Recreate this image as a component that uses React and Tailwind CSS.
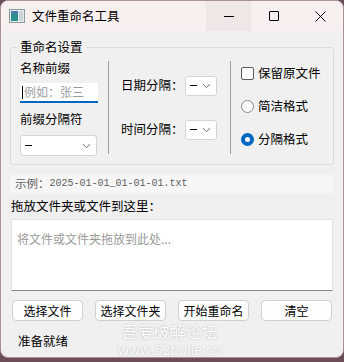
import React from 'react';

const CJK = { fontFamily: '"Noto Sans CJK SC", "Noto Sans", sans-serif' };

const Chevron = () => (
    <svg width="9" height="6" viewBox="0 0 9 6" className="shrink-0">
        <path d="M1 1.2 L4.5 4.6 L8 1.2" fill="none" stroke="#6b6b6b" strokeWidth="1" />
    </svg>
);

const Combo = ({ className }) => (
    <div className={`flex items-center justify-between bg-white border border-[#d4d4d4] rounded-[3px] pl-[4px] pr-[5px] ${className}`}>
        <div className="w-[7px] h-px bg-black" />
        <Chevron />
    </div>
);

const Radio = ({ checked }) =>
    checked ? (
        <div className="w-[13px] h-[13px] rounded-full bg-[#0067c0] flex items-center justify-center">
            <div className="w-[5px] h-[5px] rounded-full bg-white" />
        </div>
    ) : (
        <div className="w-[13px] h-[13px] rounded-full border border-[#8a8a8a] bg-[#fbfbfb]" />
    );

const Btn = ({ children }) => (
    <button className="w-[71px] h-[21px] bg-[#fdfdfd] border border-[#d0d0d0] rounded-[4px] text-[12px] leading-none text-black flex items-center justify-center">
        {children}
    </button>
);

export default function App() {
    return (
        <div className="w-[344px] h-[362px] bg-[#6d4e56] overflow-hidden" style={CJK}>
            <div className="relative w-[344px] h-[358px] rounded-[8px] border border-[#a89296] bg-[#f0f0f0] overflow-hidden flex flex-col">
                {/* 标题栏 */}
                <div className="h-[30px] bg-[#f8efef] flex items-center shrink-0">
                    <svg width="16" height="14" viewBox="0 0 16 14" className="ml-[8px]">
                        <rect x="0.5" y="0.5" width="15" height="13" fill="#e8eef0" stroke="#8a9aa0" />
                        <rect x="2" y="2" width="7" height="10" fill="#2f8f8a" />
                        <rect x="2" y="2" width="7" height="3" fill="#4a7fb0" />
                        <rect x="10" y="2" width="4" height="10" fill="#c8d4d8" />
                    </svg>
                    <span className="ml-[7px] text-[12.5px] text-black">文件重命名工具</span>
                    <div className="ml-auto flex h-full">
                        <div className="w-[45px] h-full bg-[#efe6e6] flex items-center justify-center">
                            <div className="w-[10px] h-px bg-black" />
                        </div>
                        <div className="w-[46px] h-full flex items-center justify-center">
                            <div className="w-[10px] h-[10px] border border-black rounded-[1px]" />
                        </div>
                        <div className="w-[46px] h-full flex items-center justify-center">
                            <svg width="11" height="11" viewBox="0 0 11 11">
                                <path d="M0.5 0.5 L10.5 10.5 M10.5 0.5 L0.5 10.5" stroke="#000" strokeWidth="1" />
                            </svg>
                        </div>
                    </div>
                </div>

                {/* 重命名设置 */}
                <fieldset className="mx-[9px] mt-[8px] h-[126px] border border-[#dcdcdc] rounded-[2px] flex px-[9px] pb-[8px]">
                    <legend className="-ml-[3px] px-[3px] text-[12.5px] leading-[16px] text-black">重命名设置</legend>
                    <div className="w-[78px] flex flex-col pt-[5px]">
                        <span className="text-[12.5px] leading-[16px] text-black">名称前缀</span>
                        <div className="mt-[7px] h-[20px] bg-white border-b-2 border-[#0067c0] flex items-center pl-[2px]">
                            <div className="w-px h-[13px] bg-black" />
                            <span className="ml-px text-[12px] leading-none text-[#9c9c9c]">例如：张三</span>
                        </div>
                        <span className="mt-[8px] text-[12.5px] leading-[16px] text-black">前缀分隔符</span>
                        <Combo className="mt-[8px] h-[21px] w-[77px]" />
                    </div>
                    <div className="ml-[10px] mt-[6px] w-px h-[93px] bg-[#a0a0a0]" />
                    <div className="w-[121px] flex flex-col pl-[12px] pt-[20px]">
                        <div className="flex items-center h-[21px]">
                            <span className="w-[64px] text-[12.5px] leading-none text-black">日期分隔：</span>
                            <Combo className="h-[20px] w-[32px]" />
                        </div>
                        <div className="flex items-center h-[21px] mt-[23px]">
                            <span className="w-[64px] text-[12.5px] leading-none text-black">时间分隔：</span>
                            <Combo className="h-[20px] w-[32px]" />
                        </div>
                    </div>
                    <div className="mt-[6px] w-px h-[93px] bg-[#a0a0a0]" />
                    <div className="flex flex-col pl-[10px] pt-[12px] gap-[20px]">
                        <div className="flex items-center h-[13px]">
                            <div className="w-[13px] h-[13px] border border-[#5c5c5c] rounded-[2px] bg-[#fbfbfb]" />
                            <span className="ml-[4px] text-[12.5px] leading-none text-black">保留原文件</span>
                        </div>
                        <div className="flex items-center h-[13px]">
                            <Radio />
                            <span className="ml-[4px] text-[12.5px] leading-none text-black">简洁格式</span>
                        </div>
                        <div className="flex items-center h-[13px]">
                            <Radio checked />
                            <span className="ml-[4px] text-[12.5px] leading-none text-black">分隔格式</span>
                        </div>
                    </div>
                </fieldset>

                {/* 示例 */}
                <div className="mx-[9px] mt-[10px] h-[18px] bg-[#f6f6f6] flex items-center pl-[5px] text-[#5e5e5e]">
                    <span className="text-[11.5px] leading-none">示例：</span>
                    <span className="text-[10px] leading-none" style={{ fontFamily: '"Liberation Mono", monospace' }}>
                        2025-01-01_01-01-01.txt
                    </span>
                </div>

                {/* 拖放区 */}
                <span className="ml-[10px] mt-[5px] text-[12.5px] leading-[16px] text-black">拖放文件夹或文件到这里：</span>
                <div className="mx-[10px] mt-[5px] h-[72px] bg-white border border-[#e3e3e3] border-b-[#8a8a8a] px-[5px] pt-[5px]">
                    <span className="text-[12px] leading-[14px] text-[#9a9a9a]">将文件或文件夹拖放到此处...</span>
                </div>

                {/* 按钮 */}
                <div className="mt-[9px] ml-[11px] flex gap-[12px]">
                    <Btn>选择文件</Btn>
                    <Btn>选择文件夹</Btn>
                    <Btn>开始重命名</Btn>
                    <Btn>清空</Btn>
                </div>

                <span className="ml-[17px] mt-[12px] text-[12.5px] leading-[16px] text-black">准备就绪</span>

                {/* 水印 */}
                <div className="absolute left-[117px] top-[321px] flex flex-col items-center gap-[1px] text-white opacity-85 pointer-events-none [text-shadow:0_0_2px_rgba(0,0,0,0.3)]">
                    <span className="text-[16px] leading-[19px]">吾爱破解论坛</span>
                    <span className="text-[14px] leading-[15px]" style={{ fontFamily: '"Open Sans", sans-serif' }}>www.52pojie.cn</span>
                </div>
            </div>
        </div>
    );
}
